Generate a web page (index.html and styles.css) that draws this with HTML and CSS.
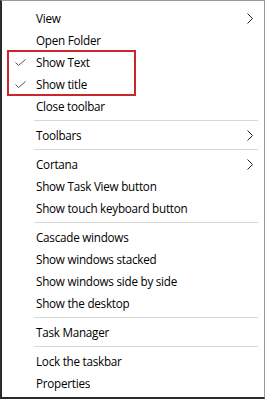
FILE: index.html
```html
<!DOCTYPE html>
<html lang="en">
<head>
    <meta charset="UTF-8">
    <meta name="viewport" content="width=device-width, initial-scale=1.0">
    <title>Taskbar Menu</title>
    <link rel="stylesheet" href="styles.css">
</head>
<body>
    <div class="menu">
        <div class="item">View<svg class="arrow" viewBox="0 0 6 11"><polyline points="0.5,0.5 5.5,5.5 0.5,10.5"/></svg></div>
        <div class="item">Open Folder</div>
        <div class="highlight">
            <div class="item"><svg class="check" viewBox="0 0 11 7"><polyline points="0.5,3.5 3.5,6.5 10.5,0.5"/></svg>Show Text</div>
            <div class="item"><svg class="check" viewBox="0 0 11 7"><polyline points="0.5,3.5 3.5,6.5 10.5,0.5"/></svg>Show title</div>
        </div>
        <div class="item">Close toolbar</div>
        <div class="sep"></div>
        <div class="item">Toolbars<svg class="arrow" viewBox="0 0 6 11"><polyline points="0.5,0.5 5.5,5.5 0.5,10.5"/></svg></div>
        <div class="sep"></div>
        <div class="item">Cortana<svg class="arrow" viewBox="0 0 6 11"><polyline points="0.5,0.5 5.5,5.5 0.5,10.5"/></svg></div>
        <div class="item">Show Task View button</div>
        <div class="item">Show touch keyboard button</div>
        <div class="sep"></div>
        <div class="item">Cascade windows</div>
        <div class="item">Show windows stacked</div>
        <div class="item">Show windows side by side</div>
        <div class="item">Show the desktop</div>
        <div class="sep"></div>
        <div class="item">Task Manager</div>
        <div class="sep"></div>
        <div class="item">Lock the taskbar</div>
        <div class="item">Properties</div>
    </div>
</body>
</html>
```
FILE: styles.css
```css
body { margin: 0; background: #fff; font-family: "Open Sans", "Noto Sans", sans-serif; font-size: 11.7px; letter-spacing: -0.25px; color: #000; }
.menu { width: 262px; padding: 6px 0 3px; border: 1px solid #9a9a9a; border-left: 2px solid #2a2a2a; border-bottom: 2px solid #2a2a2a; background: #fff; }
.item { position: relative; height: 22px; line-height: 22px; padding-left: 34px; white-space: nowrap; }
.sep { height: 1px; margin: 3px 6px 3px 32px; background: #d7d7d7; }
.highlight { position: relative; }
.highlight::after { content: ""; position: absolute; left: 5px; top: -1px; width: 125px; bottom: -1px; border: 2px solid #c9262d; }
.check { position: absolute; left: 13px; top: 8px; width: 11px; height: 7px; fill: none; stroke: #555; stroke-width: 1; }
.arrow { position: absolute; right: 11px; top: 6px; width: 6px; height: 11px; fill: none; stroke: #222; stroke-width: 1; }
```
